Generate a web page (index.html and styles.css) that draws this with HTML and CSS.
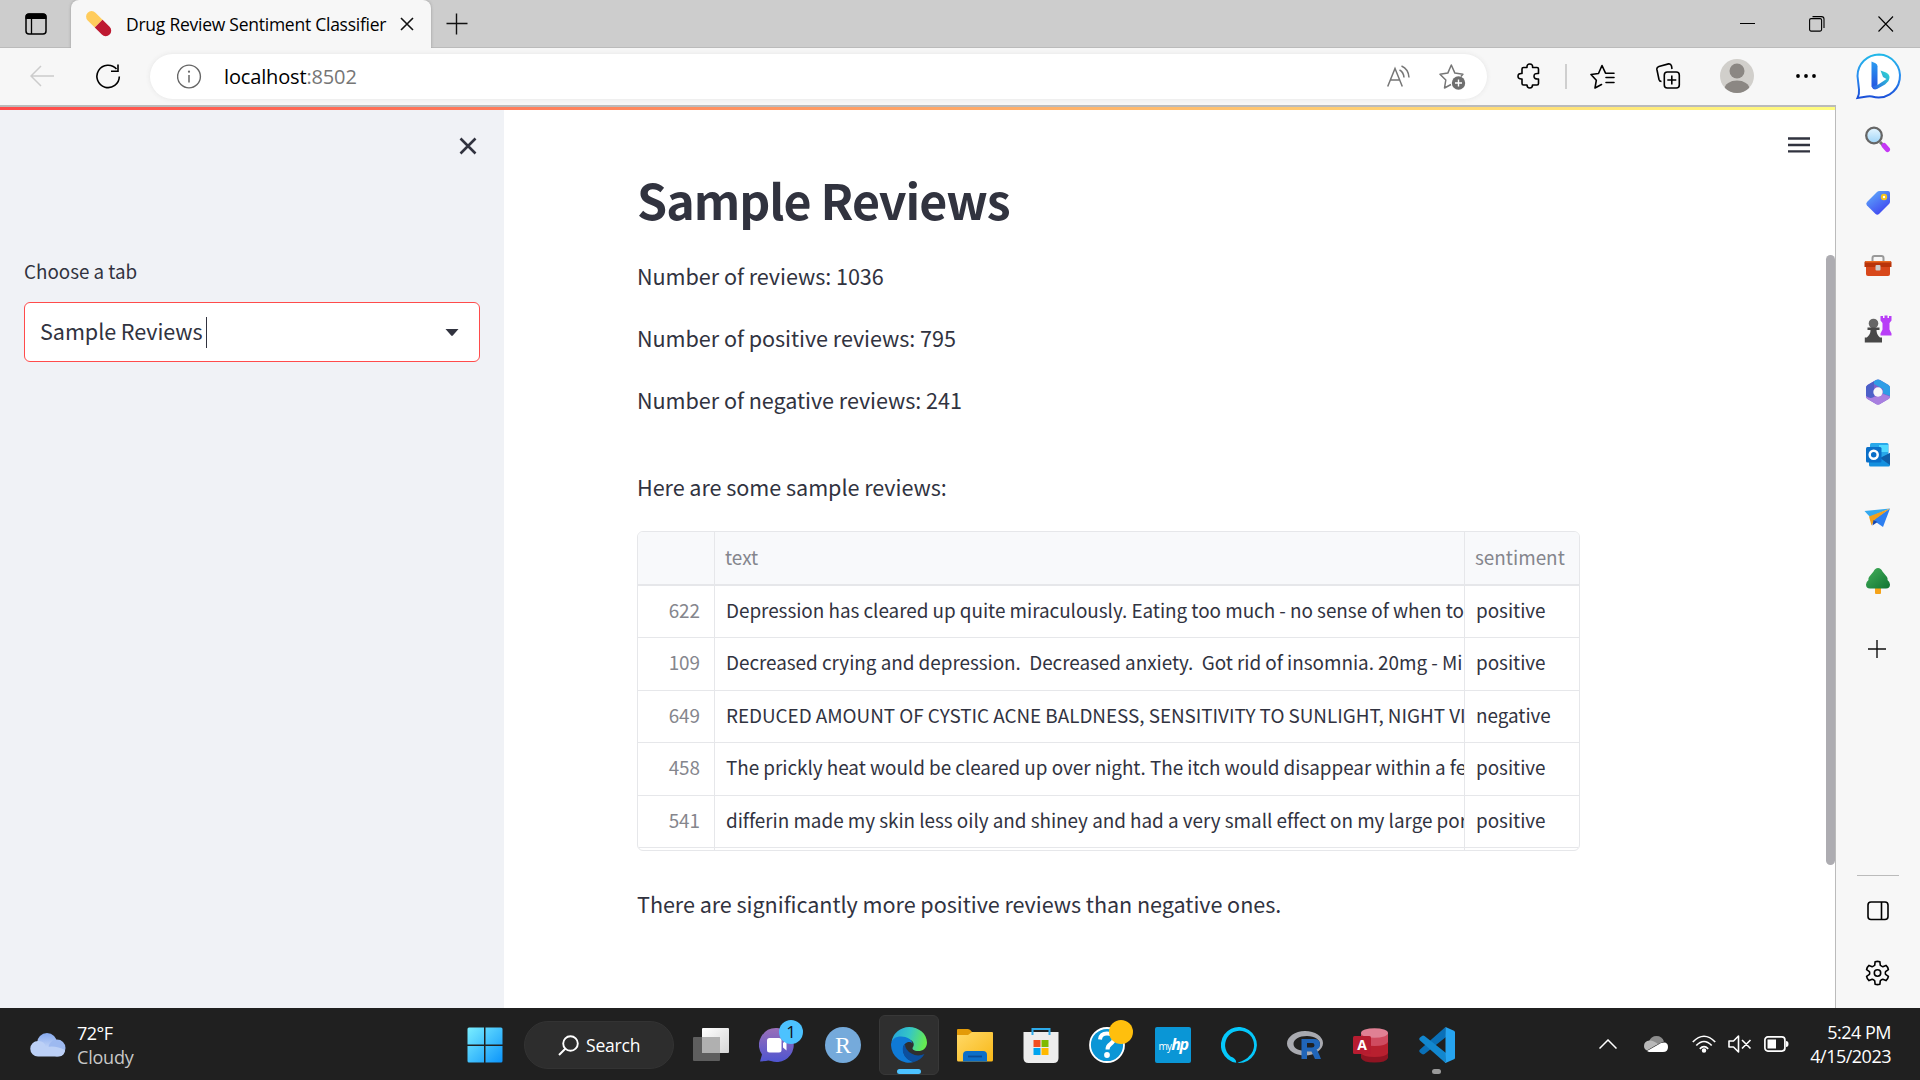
FILE: index.html
```html
<!DOCTYPE html>
<html lang="en">
<head>
<meta charset="utf-8">
<title>Drug Review Sentiment Classifier</title>
<link rel="stylesheet" href="styles.css">
</head>
<body>
<header class="tabstrip">
  <svg class="workspace" width="22" height="22" viewBox="0 0 22 22"><rect x="1" y="1" width="20" height="20" rx="3" fill="none" stroke="#000" stroke-width="1.5"/><path d="M.5 6V4a3.500 3.500 0 0 1 3.500-3.500h14A3.500 3.500 0 0 1 21.500 4v2z"/><path d="M6.500 6v15" stroke="#000" stroke-width="1.300"/></svg>
  <div class="tab">
    <svg width="26" height="26" viewBox="0 0 26 26"><g transform="rotate(45 13 13)"><path d="M13 7.500H3a5.500 5.500 0 0 0 0 11h10z" fill="#ffcc5c" transform="translate(-.5 0)"/><path d="M12.500 7.500h10a5.500 5.500 0 0 1 0 11h-10z" fill="#be1931"/></g></svg>
    <span class="tab-title">Drug Review Sentiment Classifier</span>
    <svg width="14" height="14" viewBox="0 0 14 14"><path d="M1 1l12 12M13 1L1 13" stroke="#111" stroke-width="1.600"/></svg>
  </div>
  <svg class="newtab" width="22" height="22" viewBox="0 0 22 22"><path d="M10.500 .5v21M.5 10.500h21" stroke="#111" stroke-width="1.400"/></svg>
  <div class="window-controls">
    <svg width="16" height="16" viewBox="0 0 16 16"><path d="M0 7.500h15" stroke="#000"/></svg>
    <svg width="16" height="16" viewBox="0 0 16 16" fill="none" stroke="#000" stroke-width="1.100"><rect x=".6" y="2.600" width="12" height="12.500" rx="1.500"/><path d="M3.500.6h9a2.500 2.500 0 0 1 2.500 2.500v9"/></svg>
    <svg width="16" height="16" viewBox="0 0 16 16"><path d="M.5.500l14.500 15M15 .5L.5 15.500" stroke="#000" stroke-width="1.100"/></svg>
  </div>
</header>
<div class="toolbar">
  <svg class="back" width="24" height="22" viewBox="0 0 24 22"><path d="M24 11H1M11 1L1 11l10 10" fill="none" stroke="#ccc" stroke-width="1.500"/></svg>
  <svg class="reload" width="25" height="25" viewBox="0 0 25 25"><path d="M23.300 12.500A11.200 11.200 0 1 1 20.500 5M22 .5v6.800h-7" fill="none" stroke="#000" stroke-width="1.600"/></svg>
  <div class="address">
    <svg width="25" height="25" viewBox="0 0 25 25"><circle cx="12" cy="12.500" r="11.400" fill="none" stroke="#666" stroke-width="1.400"/><path d="M12 11v7.500" stroke="#666" stroke-width="1.500"/><circle cx="12" cy="7.700" r="1.100" fill="#666"/></svg>
    <span class="url">localhost<span class="port">:8502</span></span>
    <svg class="read" width="24" height="24" viewBox="0 0 24 24" fill="none" stroke="#767676" stroke-width="1.500"><path d="M.7 21.500L8 3.500l7.300 18M3.500 15h9M12.500 5q4 2 4.500 7.500M14.500 1q7 3 7.500 11.500"/></svg>
    <svg class="addfav" width="27" height="27" viewBox="0 0 27 27"><path d="M12 21.500l-6.500 3.500 1.300-8L1 11.300l7.800-1.200L12.300 2l3.600 8.100 8 1.200-2 2.200" fill="none" stroke="#767676" stroke-width="1.500" stroke-linejoin="round"/><circle cx="19.500" cy="20" r="6.700" fill="#6e6e6e"/><path d="M19.500 16.500v7M16 20h7" stroke="#fff" stroke-width="1.400"/></svg>
  </div>
  <svg class="puzzle" width="24" height="26" viewBox="0 0 24 26"><path d="M6.500 4.500H10q-.3-3.500 2.800-3.500t2.800 3.500H20q1.500 0 1.500 1.500v4.500q-4.500-.5-4.500 2.700t4.500 2.800v4.500q0 1.500-1.500 1.500h-4.500q0 3-2.700 3T10 22H6.500Q5 22 5 20.500V16q-4 .3-4-2.800t4-2.700V6q0-1.500 1.500-1.500z" fill="none" stroke="#000" stroke-width="1.600" stroke-linejoin="round"/></svg>
  <i class="divider"></i>
  <svg class="favs" width="25" height="25" viewBox="0 0 25 25" fill="none" stroke="#000" stroke-width="1.600" stroke-linejoin="round" stroke-linecap="round"><path d="M11.500 20.500L5 24l1.300-7.700L1 10.500l7.500-1L12 1.500l3.500 7.700h8.500M16 13.500h8M16 18.500h8"/></svg>
  <svg class="collect" width="25" height="26" viewBox="0 0 25 26" fill="none" stroke="#000" stroke-width="1.600"><rect x="8.300" y="9" width="15" height="16" rx="3"/><path d="M15.800 12.500v9M11.300 17h9M5.500 18.500q-2 0-2.500-2L.9 6.500q-.4-2.300 2-3L12.500.9q2.300-.3 3 2L16 6" /></svg>
  <svg class="avatar" width="36" height="36" viewBox="0 0 36 36"><defs><clipPath id="av"><circle cx="18" cy="18" r="17"/></clipPath></defs><circle cx="18" cy="18" r="17" fill="#d1cfcb"/><circle cx="18" cy="13" r="7.500" fill="#8b8783"/><ellipse cx="18" cy="31" rx="12.500" ry="8.500" fill="#8b8783" clip-path="url(#av)"/></svg>
  <svg class="more" width="22" height="6" viewBox="0 0 22 6"><circle cx="3" cy="3" r="1.900"/><circle cx="11" cy="3" r="1.900"/><circle cx="19" cy="3" r="1.900"/></svg>
  <svg class="bing" width="48" height="50" viewBox="0 0 48 50"><defs><linearGradient id="bo" x1="0" y1="0" x2="0" y2="1"><stop offset="0" stop-color="#22b8e8"/><stop offset=".5" stop-color="#2a8df0"/><stop offset="1" stop-color="#1b4fd8"/></linearGradient><linearGradient id="bb" x1="0" y1="0" x2="0" y2="1"><stop offset="0" stop-color="#2b9cf0"/><stop offset="1" stop-color="#2350e0"/></linearGradient><linearGradient id="bc" x1="1" y1="0" x2="0" y2="1"><stop offset="0" stop-color="#2fe0d0"/><stop offset="1" stop-color="#2a58e6"/></linearGradient></defs><path d="M24 3.500a21.500 21.500 0 1 1-7 42q-2-.5-5 0l-9.500 1.500q2-4 1.500-8.500T2.500 25A21.500 21.500 0 0 1 24 3.500z" fill="#fff" stroke="url(#bo)" stroke-width="2"/><path d="M16.500 10.500l4 1.700q2 1 2 3V35l-3 3-3-2.500z" fill="url(#bb)"/><path d="M16.500 35.500q1.500 4 5.500 2.500l8-4.500 3.500-3.500q3-6-2.500-8.500l-5.500-2 2.500 6.500 3.500 2-9 6z" fill="url(#bc)"/></svg>
</div>
<div class="browser">
  <div class="page">
    <div class="decoration"></div>
    <div class="app">
      <aside class="sidebar">
        <svg class="close" width="20" height="20" viewBox="0 0 20 20"><path d="M2.500 2.500l15 15M17.500 2.500l-15 15" stroke="#31333f" stroke-width="2.600"/></svg>
        <label class="label">Choose a tab</label>
        <div class="select"><span class="value">Sample Reviews</span><i class="caret"></i><svg width="14" height="9" viewBox="0 0 14 9"><path d="M.5 1h13L7.800 7.500q-.8.800-1.600 0z" fill="#31333f"/></svg></div>
      </aside>
      <main class="content">
        <svg class="menu" width="24" height="18" viewBox="0 0 24 18"><path d="M1 2.500h22M1 9h22M1 15.300h22" stroke="#31333f" stroke-width="2.300"/></svg>
        <h1>Sample Reviews</h1>
        <p>Number of reviews: 1036</p>
        <p>Number of positive reviews: 795</p>
        <p>Number of negative reviews: 241</p>
        <p class="intro">Here are some sample reviews:</p>
        <div class="table">
          <div class="row head"><span></span><span class="cell">text</span><span class="cell">sentiment</span></div>
          <div class="row"><span class="idx">622</span><span class="cell">Depression has cleared up quite miraculously. Eating too much - no sense of when to</span><span class="cell">positive</span></div>
          <div class="row"><span class="idx">109</span><span class="cell">Decreased crying and depression.&nbsp; Decreased anxiety.&nbsp; Got rid of insomnia. 20mg - Mi</span><span class="cell">positive</span></div>
          <div class="row"><span class="idx">649</span><span class="cell">REDUCED AMOUNT OF CYSTIC ACNE BALDNESS, SENSITIVITY TO SUNLIGHT, NIGHT VI</span><span class="cell">negative</span></div>
          <div class="row"><span class="idx">458</span><span class="cell">The prickly heat would be cleared up over night. The itch would disappear within a fe</span><span class="cell">positive</span></div>
          <div class="row"><span class="idx">541</span><span class="cell">differin made my skin less oily and shiney and had a very small effect on my large por</span><span class="cell">positive</span></div>
          <div class="row rest"><span></span><span></span><span></span></div>
        </div>
        <p class="outro">There are significantly more positive reviews than negative ones.</p>
      </main>
      <div class="scroll"><i></i></div>
    </div>
  </div>
  <nav class="rail">
    <div class="slot first"><svg width="28" height="28" viewBox="0 0 28 28"><defs><linearGradient id="mg" x1="0" y1="0" x2="0" y2="1"><stop offset="0" stop-color="#e6f6ff"/><stop offset="1" stop-color="#9fd4f7"/></linearGradient></defs><path d="M16 17l3 3" stroke="#777" stroke-width="3"/><path d="M20 20.500l3.500 4" stroke="#c438f5" stroke-width="5" stroke-linecap="round"/><circle cx="10" cy="10.500" r="7.800" fill="url(#mg)" stroke="#666" stroke-width="2.300"/></svg></div>
    <div class="slot"><svg width="28" height="28" viewBox="0 0 28 28"><defs><linearGradient id="tg" x1="0" y1="0" x2=".7" y2="1"><stop offset="0" stop-color="#62b4fb"/><stop offset="1" stop-color="#3f43f0"/></linearGradient></defs><path d="M15.500 2H24q2 0 2 2v8.500q0 1.500-1 2.500L15 25q-1.700 1.500-3.400 0L3 16.500q-1.600-1.700 0-3.400L13 3q1-1 2.500-1z" fill="url(#tg)"/><circle cx="20" cy="8" r="2.200" fill="#fff" stroke="#f3c320" stroke-width="2"/></svg></div>
    <div class="slot"><svg width="28" height="28" viewBox="0 0 28 28"><path d="M8.500 10V6q0-2 2-2h7q2 0 2 2v4" fill="none" stroke="#999" stroke-width="2"/><path d="M2 12h24v10q0 2-2 2H4q-2 0-2-2z" fill="#d8481b"/><path d="M2 9h24q1.500 0 1.500 1.500V15H.5v-4.500Q.5 9 2 9z" fill="#b9340a"/><path d="M2 9h24l1 1.500H1z" fill="#ea6a22"/><rect x="11.500" y="13" width="5" height="5.500" rx="1" fill="#ccc"/></svg></div>
    <div class="slot"><svg width="28" height="30" viewBox="0 0 28 30"><path d="M16.500 2H19v2h1.500V1.500h3V4H25V2h2.500v4.500L25.500 9v6.500l2 4v2h-11v-2l2-4V9l-2-2.500z" fill="#b83df7"/><circle cx="9.500" cy="9.500" r="4.800" fill="#666"/><path d="M3.500 13.500h12V16h-3q0 5 3.500 7.500h2v5H.8v-5h2Q6.800 20 6.500 16h-3z" fill="#484848"/></svg></div>
    <div class="slot"><svg width="28" height="28" viewBox="0 0 28 28"><path d="M14 1.500q1 0 2 .5l8.500 5q1.500 1 1.500 2.500v9q0 1.500-1.500 2.500L16 26q-2 1-4 0l-8.500-5Q2 20 2 18.500v-9Q2 8 3.500 7L12 2q1-.5 2-.5z" fill="#7c62cc"/><path d="M14 1.500q1 0 2 .5l8.500 5q1.500 1 1.500 2.500V18l-7-2.500V11L10 6V3.200L12 2z" fill="#2f9de6"/><path d="M10 3.200V19q-4 2.500-8-1V9.500Q2 8 3.500 7z" fill="#4c60c8"/><path d="M2 18q4 3.500 8 1l9-3 7 2.500q0 1.500-1.500 2.500L16 26q-2 1-4 0l-8.500-5Q2 20 2 18z" fill="#a87fe0"/><circle cx="14" cy="14" r="4.700" fill="#f7f7f7"/></svg></div>
    <div class="slot"><svg width="28" height="28" viewBox="0 0 28 28"><rect x="6" y="2" width="18.500" height="16" rx="1.500" fill="#28a8ea"/><path d="M15 4h9v7h-9z" fill="#50d9ff"/><path d="M5 12l11 5 10-5v12q0 1.500-1.500 1.500h-18Q5 25.500 5 24z" fill="#1490df"/><path d="M26 12v12l-10-7z" fill="#0f5ea8"/><rect x="2" y="6" width="15.500" height="15.500" rx="1.500" fill="#0a6fc8"/><circle cx="9.700" cy="13.700" r="4" fill="none" stroke="#fff" stroke-width="2.500"/></svg></div>
    <div class="slot"><svg width="28" height="22" viewBox="0 0 28 22"><path d="M.5 4L26 1.500 6 10z" fill="#35a9ee"/><path d="M26 1.500L19 20l-10-7z" fill="#2d7ff0"/><path d="M5 9.500L26 1.500 11 12.500 7.500 18.500z" fill="#f0a01c"/><path d="M9.500 13l4 2-5 3.500z" fill="#1547b0"/></svg></div>
    <div class="slot"><svg width="28" height="28" viewBox="0 0 28 28"><rect x="11" y="19" width="6" height="8" rx="1" fill="#f5a31a"/><defs><linearGradient id="tr" x1="0" y1="0" x2="1" y2="1"><stop offset="0" stop-color="#45b05c"/><stop offset="1" stop-color="#0f7431"/></linearGradient></defs><path d="M14 1q3 0 4.500 3.500L23 10q1 2 .5 3 2.500 2 2.500 4.500 0 4-4 4H6q-4 0-4-4 0-2.500 2.500-4.500-.5-1 .5-3l4.500-5.500Q11 1 14 1z" fill="url(#tr)"/></svg></div>
    <div class="slot add"><svg width="18" height="18" viewBox="0 0 18 18"><path d="M9 0v18M0 9h18" stroke="#111" stroke-width="1.400"/></svg></div>
    <div class="rail-end">
      <svg width="22" height="20" viewBox="0 0 22 20" fill="none" stroke="#000" stroke-width="1.600"><rect x="1" y="1" width="20" height="17.500" rx="3"/><path d="M14.500 1v17.500"/></svg>
      <svg width="25" height="26" viewBox="-12.500 -12.500 25 25" fill="none" stroke="#000" stroke-width="1.600" stroke-linejoin="round"><path d="M-2.800-7.700L-2.400-11.200Q0-12 2.400-11.200L2.800-7.700Q4-6.500 5.270-6.270L8.500-7.600Q10.500-6 10.900-3.400L8.070-1.430Q7.500 0 8.070 1.430L10.900 3.400Q10.500 6 8.500 7.600L5.270 6.270Q4 6.500 2.800 7.700L2.400 11.200Q0 12-2.400 11.200L-2.800 7.700Q-4 6.500-5.270 6.270L-8.500 7.600Q-10.500 6-10.900 3.400L-8.070 1.430Q-7.500 0-8.070-1.430L-10.900-3.400Q-10.500-6-8.500-7.600L-5.270-6.270Q-4-6.500-2.800-7.700z"/><circle r="3.200"/></svg>
    </div>
  </nav>
</div>
<footer class="taskbar">
  <div class="weather">
    <svg width="38" height="26" viewBox="0 0 38 26"><defs><linearGradient id="cl" x1="0" y1="0" x2="0" y2="1"><stop offset="0" stop-color="#86a9ee"/><stop offset="1" stop-color="#d5e2fa"/></linearGradient></defs><circle cx="18" cy="11" r="10" fill="url(#cl)"/><circle cx="28" cy="16" r="8.500" fill="#9db9f0"/><path d="M9 9a8 8 0 0 1 8 6q10-2 19 3a6 6 0 0 1-6 6.500H9A7.500 7.500 0 0 1 9 9z" fill="#bcd0f6"/></svg>
    <div class="stack"><span>72°F</span><span class="dim">Cloudy</span></div>
  </div>
  <div class="apps">
    <div class="appicon"><svg width="36" height="36" viewBox="0 0 36 36"><defs><linearGradient id="ws" gradientUnits="userSpaceOnUse" x1="0" y1="0" x2="36" y2="36"><stop offset="0" stop-color="#7cf0ff"/><stop offset="1" stop-color="#0a93fb"/></linearGradient></defs><path d="M2 0.500h15v17H.5V2Q.5.500 2 .5zM18.500.500h15.500q1.500 0 1.500 1.500v15.500h-17zM.5 19H17v16.500H2Q.5 35.500.5 34zM18.500 19h17v15q0 1.500-1.500 1.500H18.500z" fill="url(#ws)"/></svg></div>
    <div class="search"><svg width="21" height="21" viewBox="0 0 21 21"><circle cx="12.500" cy="8.500" r="7.300" fill="none" stroke="#fff" stroke-width="1.900"/><path d="M7.500 13.500L1 20" stroke="#fff" stroke-width="2"/></svg><span>Search</span></div>
    <div class="appicon"><svg width="38" height="36" viewBox="0 0 38 36"><defs><linearGradient id="tv" x1="0" y1="0" x2="1" y2="1"><stop offset="0" stop-color="#fff"/><stop offset="1" stop-color="#d6d6d6"/></linearGradient></defs><rect x="10" y="1" width="27" height="25" rx="1" fill="url(#tv)"/><rect x="1" y="10" width="27" height="24" rx="1" fill="#5e5e5e"/><rect x="10" y="10" width="18" height="16" fill="#b0b0b0"/></svg></div>
    <div class="appicon"><svg width="36" height="36" viewBox="0 0 36 36"><defs><linearGradient id="ch" x1="0" y1="0" x2="0" y2="1"><stop offset="0" stop-color="#9a6fb8"/><stop offset="1" stop-color="#4f55d0"/></linearGradient></defs><path d="M18 1a17 17 0 1 1-6 33q-3-1-5 0L1 34.500l2-7A17 17 0 0 1 18 1z" fill="url(#ch)"/><rect x="8" y="11" width="14.500" height="14.500" rx="2.500" fill="#fff"/><path d="M24 16l3.500-3v10.500L24 20.500z" fill="#fff"/></svg><b class="badge">1</b></div>
    <div class="appicon"><span class="rstudio">R</span></div>
    <div class="appicon"><div class="active"><svg width="36" height="36" viewBox="0 0 36 36"><defs><linearGradient id="e1" x1="0" y1=".2" x2="1" y2=".4"><stop offset="0" stop-color="#24a3dc"/><stop offset=".5" stop-color="#35c6c6"/><stop offset="1" stop-color="#66eb50"/></linearGradient></defs><path d="M.5 15A18 18 0 0 1 18 0c10 0 18 7 18 15.500 0 6-4.500 8.500-8.500 8.500-5 0-7-2-5.500-4 1.500-2 1-6-3.500-7.500C11 10 3 12 .5 15z" fill="url(#e1)"/><path d="M0 18C0 12 5 9.500 10 9.500c6 0 11 3 11.500 7-3-3-9-1-9.500 5-.3 6 4 12 11 13.500A18 18 0 0 1 0 18z" fill="#0f7ad6"/><path d="M14 17q-3 2-2 8 2 8 11 10 7-2 10.500-8-7 3-13-.5Q14 23 14 17z" fill="#0c4f9e"/></svg><i class="running"></i></div></div>
    <div class="appicon"><svg width="36" height="36" viewBox="0 0 36 36"><defs><linearGradient id="fo" x1="0" y1="0" x2="1" y2="1"><stop offset="0" stop-color="#ffd968"/><stop offset="1" stop-color="#f9b817"/></linearGradient></defs><path d="M0 3q0-1 1-1h10q2 0 4 3l5 1v5H0z" fill="#e39b09"/><path d="M0 8h11l4-3h20q1 0 1 1v27q0 1.500-1.500 1.500h-33Q0 34.500 0 33z" fill="url(#fo)"/><path d="M6 34.500V28q0-4 4-4h16q4 0 4 4v6.500z" fill="#0c6fc8"/><path d="M11 29.500h14" stroke="#0a4c94" stroke-width="1.800"/></svg></div>
    <div class="appicon"><svg width="36" height="36" viewBox="0 0 36 36"><path d="M.5 5h35v26q0 5-5 5h-25q-5 0-5-5z" fill="#ededed"/><path d="M9.500 8V2h17v6" fill="none" stroke="#2daaea" stroke-width="2"/><path d="M10.500 13h7v7h-7z" fill="#f25022"/><path d="M18.500 13h7v7h-7z" fill="#7fba00"/><path d="M10.500 21h7v7h-7z" fill="#00a4ef"/><path d="M18.500 21h7v7h-7z" fill="#ffb900"/></svg></div>
    <div class="appicon"><svg width="36" height="36" viewBox="0 0 36 36"><circle cx="18" cy="18" r="17" fill="#0a96d6" stroke="#fff" stroke-width="1.800"/><path d="M11 12.500q.5-6 7-6 6.500 0 7 5 0 3-3.500 5.500-3 2-3 5.500" fill="none" stroke="#fff" stroke-width="4"/><circle cx="18" cy="28" r="2.900" fill="#fff"/></svg><b class="badge warn"></b></div>
    <div class="appicon"><span class="myhp">my<b>hp</b></span></div>
    <div class="appicon"><svg width="36" height="36" viewBox="0 0 36 36"><path fill-rule="evenodd" d="M15.200 35.800A18 18 0 1 1 18 36l-1.500-.2q9-2.800 12-7A14.500 14.500 0 1 0 9.500 29.500q5.900 2 5.700 6.300z" fill="#05c8fb"/></svg></div>
    <div class="appicon"><svg width="36" height="30" viewBox="0 0 36 30"><path fill-rule="evenodd" d="M18 1c10 0 18 5.500 18 12s-8 12.500-18 12.500S0 20 0 13.500 8 1 18 1zm2 5c-8 0-13.500 3.500-13.500 8S12 21 20 21s13-3 13-7-5-8-13-8z" fill="#a9aab0"/><path fill-rule="evenodd" d="M14.500 9H27q6 0 6 5.500 0 4-3.500 5 1 .5 4.500 9.500h-6l-3.500-7.500H20V29h-5.500zM20 13v4.500h5q2.500 0 2.500-2.300T25 13z" fill="#2065b8"/></svg></div>
    <div class="appicon"><svg width="36" height="36" viewBox="0 0 36 36"><path d="M8 6v25q2 4.500 13.500 4.500T35 31V6z" fill="#8f1422"/><path d="M8 13h27v13q-2 4-13.500 4T8 26z" fill="#b8202f"/><path d="M8 6h27v9q-2 4-13.500 4T8 15z" fill="#cf4b60"/><ellipse cx="21.500" cy="6" rx="13.500" ry="4.800" fill="#e08094"/><rect y="9" width="18" height="18" rx="1.500" fill="#b71c30"/><text x="9" y="23" text-anchor="middle" class="access">A</text></svg></div>
    <div class="appicon"><svg width="36" height="36" viewBox="0 0 36 36"><path d="M26.500 0L1 22.500q-1.500 1.500 0 3L3 27q1 .8 2.500 0L27 10z" fill="#0a70b8"/><path d="M26.500 36L1 13.500q-1.500-1.500 0-3L3 9q1-.8 2.500 0L27 26z" fill="#1287cf"/><path d="M26.500 0L35 3.700q1 .5 1 1.500v25.600q0 1-1 1.500L26.500 36q-1 0 0-1.500z" fill="#26a4f0"/></svg><i class="idle"></i></div>
  </div>
  <div class="tray">
    <svg class="chev" width="18" height="10" viewBox="0 0 18 10"><path d="M.5 9.500L9 1l8.500 8.500" fill="none" stroke="#fff" stroke-width="1.500"/></svg>
    <svg class="cloud" width="24" height="16" viewBox="0 0 24 16"><path d="M5 5.500Q7 0 12.500 0T20 5.500L12 9z" fill="#8d8d8d"/><path d="M5.500 4.500Q9 4 14 8L3 14.500Q0 13 0 10q0-5 5.500-5.500z" fill="#b9b9b9"/><path d="M3 15l14-8q7-2 7 4 0 5-5 5H5z" fill="#fff"/></svg>
    <svg class="wifi" width="24" height="18" viewBox="0 0 24 18" fill="none" stroke="#fff" stroke-width="1.700"><path d="M.8 7q11.200-11.500 22.400 0M4.300 10.500q7.700-8 15.400 0M7.800 13.800q4.200-4.300 8.400 0"/><circle cx="12" cy="15.500" r="1.400" fill="#fff"/></svg>
    <svg class="sound" width="24" height="18" viewBox="0 0 24 18" fill="none" stroke="#fff" stroke-width="1.600" stroke-linejoin="round"><path d="M1 6h4.500l5-5v16l-5-5H1zM14 5l8.500 8.500M22.500 5L14 13.500"/></svg>
    <svg class="battery" width="25" height="16" viewBox="0 0 25 16"><rect x=".9" y=".9" width="20" height="14.200" rx="3" fill="none" stroke="#fff" stroke-width="1.700"/><rect x="3.500" y="3.500" width="8.500" height="9" fill="#fff"/><path d="M22 5q2.500 0 2.500 3T22 11z" fill="#fff"/></svg>
    <div class="stack clock"><span>5:24 PM</span><span>4/15/2023</span></div>
  </div>
</footer>
</body>
</html>
```
FILE: styles.css
```css
* { box-sizing: border-box; }
body {
  margin: 0;
  width: 1920px;
  height: 1080px;
  overflow: hidden;
  display: flex;
  flex-direction: column;
  font-family: "Open Sans", "Noto Sans", sans-serif;
  background: #fff;
  color: #000;
}
svg { display: block; flex: none; }

/* Tab strip */
.tabstrip { height: 48px; flex: none; display: flex; align-items: center; background: #cdcdcd; box-shadow: inset 0 -1px #bbb; }
.workspace { margin-left: 25px; }
.tab { width: 360px; height: 48px; margin-left: 24px; padding-left: 15px; display: flex; align-items: center; background: #f7f7f7; border-radius: 8px 8px 0 0; box-shadow: 0 0 3px #999; clip-path: inset(0 -4px 0 -4px); }
.tab-title { width: 260px; margin: 0 14px; padding-bottom: 1px; font-size: 17.500px; white-space: nowrap; letter-spacing: -0.25px; }
.newtab { margin-left: 15px; }
.window-controls { margin-left: auto; margin-right: 26px; display: flex; gap: 53px; }

/* Toolbar */
.toolbar { height: 57px; flex: none; display: flex; align-items: center; background: #f7f7f7; padding: 0 0 1px 30px; }
.reload { margin-left: 42px; }
.address { width: 1337px; height: 45px; margin: 1px 0 0 29px; padding-left: 27px; display: flex; align-items: center; border-radius: 23px; background: #fff; box-shadow: 0 0 5px #e4e4e4; }
.url { margin-left: 22px; padding-bottom: 1px; font-size: 20px; letter-spacing: -0.15px; }
.port { color: #767676; }
.read { margin-left: auto; margin-right: 28px; }
.addfav { margin-right: 21px; }
.puzzle { margin-left: 30px; }
.divider { width: 2px; height: 25px; margin-left: 24px; background: #cfcfcf; }
.favs { margin-left: 23px; }
.collect { margin-left: 41px; }
.avatar { margin-left: 38px; }
.more { margin-left: 40px; }
.bing { margin-left: 38px; }

/* Viewport */
.browser { height: 903px; flex: none; display: flex; background: #f7f7f7; }
.page { width: 1836px; display: flex; flex-direction: column; border-top: 2px solid #bbb; border-right: 1px solid #bbb; background: #fff; font-family: "Noto Sans CJK SC", sans-serif; color: #31333f; }
.decoration { height: 3px; background: linear-gradient(90deg, #ff4b4b, #fffd80); }
.app { flex: 1; display: flex; min-height: 0; }
.sidebar { width: 504px; background: #f0f2f6; padding: 26px 24px 0; display: flex; flex-direction: column; }
.close { align-self: flex-end; margin-right: 2px; }
.label { margin-top: 101px; height: 28px; line-height: 28px; font-size: 18.800px; }
.select { height: 60px; margin-top: 17px; padding: 0 20px 0 15px; display: flex; align-items: center; border: 1px solid #ff4b4b; border-radius: 6px; background: #fff; }
.value { padding-bottom: 2px; font-size: 21.600px; line-height: 30px; letter-spacing: -0.07px; }
.caret { width: 1px; height: 31px; margin: 0 auto 0 3px; background: #31333f; }
.content { width: 1322px; padding: 26px 24px 0 133px; display: flex; flex-direction: column; }
.menu { align-self: flex-end; margin-right: -9px; }
h1 { margin: 13px 0 0; height: 65px; line-height: 65px; font-size: 48.300px; font-weight: 700; letter-spacing: -1px; }
p { margin: 0; height: 36px; line-height: 36px; font-size: 21.600px; letter-spacing: -0.05px; white-space: nowrap; }
p + p { margin-top: 26px; }
h1 + p { margin-top: 26px; }
p.intro { margin-top: 51px; }
.table { width: 943px; height: 320px; margin-top: 26px; border: 1px solid #e6e7ea; border-radius: 6px; overflow: hidden; font-size: 18.900px; letter-spacing: -0.035px; }
.row { height: 52.500px; display: grid; grid-template-columns: 76px 750px 1fr; border-bottom: 1px solid #e6e7ea; line-height: 48px; white-space: nowrap; }
.row > span + span { border-left: 1px solid #e6e7ea; }
.cell { padding-left: 11px; overflow: hidden; }
.idx { padding-right: 14px; text-align: right; color: #85868d; }
.head { height: 53.500px; border-bottom-width: 2px; background: #f8f9fb; color: #85868d; line-height: 49px; letter-spacing: 0; }
.head .cell { padding-left: 10px; }
.rest { height: 6px; }
p.outro { margin-top: 35px; }
.scroll { width: 9px; padding-top: 145px; }
.scroll i { display: block; height: 610px; border-radius: 5px; background: #adacb1; }

/* Edge side rail */
.rail { width: 84px; padding: 2px 1px 0 0; display: flex; flex-direction: column; align-items: center; }
.slot { height: 63px; display: flex; align-items: center; padding: 2px 0 0 1px; }
.first { padding-top: 0; }
.add { padding-top: 12px; margin-left: -2px; }
.rail-end { width: 42px; margin-top: auto; height: 133px; border-top: 1px solid #bbb; padding-top: 25px; display: flex; flex-direction: column; align-items: center; gap: 39px; }

/* Taskbar */
.taskbar { height: 72px; flex: none; display: flex; padding-top: 2px; background: #202020; color: #fff; font-size: 18px; }
.weather { width: 452px; display: flex; align-items: center; padding-left: 29px; gap: 10px; }
.stack { display: flex; flex-direction: column; line-height: 24px; letter-spacing: -0.5px; }
.dim { color: #c8c8c8; letter-spacing: -0.2px; }
.apps { display: flex; align-items: center; }
.appicon { width: 66px; height: 70px; display: flex; align-items: center; justify-content: center; position: relative; }
.search { width: 150px; height: 48px; margin: 0 4px 0 6px; padding-left: 33px; display: flex; align-items: center; gap: 7px; border-radius: 24px; background: #2d2d2d; border: 1px solid #333; white-space: nowrap; font-size: 17.500px; letter-spacing: -0.2px; }
.badge { position: absolute; right: 7px; top: 10px; width: 24px; height: 24px; border-radius: 50%; background: #4cc2ff; color: #111; text-align: center; font-weight: 400; font-size: 17px; line-height: 24px; }
.warn { background: #ffbf0d; }
.rstudio { width: 36px; height: 36px; border-radius: 50%; background: #75aadb; text-align: center; font: 24px/36px "Liberation Serif", serif; }
.active { width: 60px; height: 60px; border-radius: 6px; background: #2f2f2f; border: 1px solid #383838; display: flex; align-items: center; justify-content: center; flex: none; position: relative; }
.running { position: absolute; left: 17px; bottom: 0; width: 24px; height: 5px; border-radius: 3px; background: #4cc2ff; }
.idle { position: absolute; left: 28px; bottom: 6px; width: 9px; height: 5px; border-radius: 3px; background: #9a9a9a; }
.myhp { width: 36px; height: 36px; background: #0a96d6; border-radius: 2px; font: 10px/34px "Open Sans", sans-serif; text-align: center; letter-spacing: -0.7px; }
.myhp b { font-style: italic; font-size: 16px; letter-spacing: -1.500px; }
.access { font: bold 14px "Open Sans", sans-serif; fill: #fff; }
.tray { margin-left: auto; padding: 0 29px 2px 0; display: flex; align-items: center; }
.cloud { margin-left: 27px; }
.wifi { margin-left: 24px; }
.sound { margin-left: 12px; }
.battery { margin-left: 12px; }
.clock { width: 102px; text-align: right; }
```
